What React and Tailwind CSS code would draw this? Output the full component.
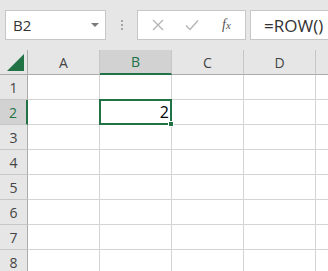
import React from 'react';

const cols = ['A', 'B', 'C', 'D', ''];
const rows = [1, 2, 3, 4, 5, 6, 7, 8];

const font = { fontFamily: '"Open Sans", "Noto Sans", sans-serif' };

const App = () => {
  return (
    <div className="w-[328px] h-[271px] overflow-hidden bg-white" style={font}>
      {/* formula bar */}
      <div className="h-[50px] bg-[#e6e6e6] flex items-start pt-[10px]">
        <div className="ml-[5px] w-[101px] h-[30px] bg-white border border-[#c6c6c6] flex items-center pl-[7px] pr-[6px]">
          <span className="text-[15px] text-[#333] flex-1 leading-none">B2</span>
          <span className="w-0 h-0 border-l-[4px] border-r-[4px] border-t-[4px] border-l-transparent border-r-transparent border-t-[#7a7a7a]" />
        </div>
        <div className="w-[31px] h-[30px] flex flex-col items-center justify-center gap-[2px]">
          <span className="w-[2px] h-[2px] bg-[#a6a6a6]" />
          <span className="w-[2px] h-[2px] bg-[#a6a6a6]" />
          <span className="w-[2px] h-[2px] bg-[#a6a6a6]" />
        </div>
        <div className="w-[109px] h-[30px] bg-white border border-[#c6c6c6] flex items-center">
          <svg width="12" height="12" viewBox="0 0 12 12" className="ml-[14px]">
            <path d="M1 1L11 11M11 1L1 11" stroke="#b5b5b5" strokeWidth="1.4" fill="none" />
          </svg>
          <svg width="14" height="12" viewBox="0 0 14 12" className="ml-[21px]">
            <path d="M1 6.5L5 10.5L13 1.5" stroke="#b5b5b5" strokeWidth="1.4" fill="none" />
          </svg>
          <span className="ml-[23px] text-[14px] italic text-[#555] leading-none" style={{ fontFamily: '"Liberation Serif", serif' }}>
            f<span className="text-[11px]">x</span>
          </span>
        </div>
        <div className="ml-[4px] flex-1 h-[30px] bg-white border border-[#c6c6c6] border-r-0 flex items-center pl-[13px]">
          <span className="text-[17px] text-[#333] leading-none">=ROW()</span>
        </div>
      </div>

      {/* grid */}
      <div className="grid grid-cols-[28px_72px_72px_72px_72px_72px] auto-rows-[25px] relative">
        <div className="bg-[#e6e6e6] border-r border-b border-[#ababab] relative">
          <svg width="18" height="17" viewBox="0 0 18 17" className="absolute right-[2px] bottom-[3px]">
            <path d="M17 0V17H0Z" fill="#217346" />
          </svg>
        </div>
        {cols.map((c) => (
          <div
            key={c || 'E'}
            className={
              c === 'B'
                ? 'bg-[#d2d2d2] border-r border-[#c6c6c6] border-b-2 border-b-[#217346] flex items-center justify-center text-[14px] text-[#217346]'
                : 'bg-[#e6e6e6] border-r border-b border-[#c6c6c6] border-b-[#ababab] flex items-center justify-center text-[14px] text-[#444]'
            }
          >
            {c}
          </div>
        ))}
        {rows.map((r) => (
          <React.Fragment key={r}>
            <div
              className={
                r === 2
                  ? 'bg-[#d2d2d2] border-b border-[#c6c6c6] border-r-2 border-r-[#217346] flex items-center justify-center text-[14px] text-[#217346]'
                  : 'bg-[#e6e6e6] border-b border-[#c6c6c6] border-r border-r-[#ababab] flex items-center justify-center text-[14px] text-[#444]'
              }
            >
              {r}
            </div>
            {cols.map((c) => (
              <div key={c || 'E'} className="border-r border-b border-[#d4d4d4] relative">
                {r === 2 && c === 'B' && (
                  <div className="absolute z-10 -left-[1px] -top-[1px] w-[73px] h-[26px] border-2 border-[#217346] flex items-center justify-end pr-[1px]">
                    <span className="text-[16px] text-black leading-none">2</span>
                    <span className="absolute -right-[4px] -bottom-[4px] w-[6px] h-[6px] bg-[#217346] border border-white" />
                  </div>
                )}
              </div>
            ))}
          </React.Fragment>
        ))}
      </div>
    </div>
  );
};

export default App;
